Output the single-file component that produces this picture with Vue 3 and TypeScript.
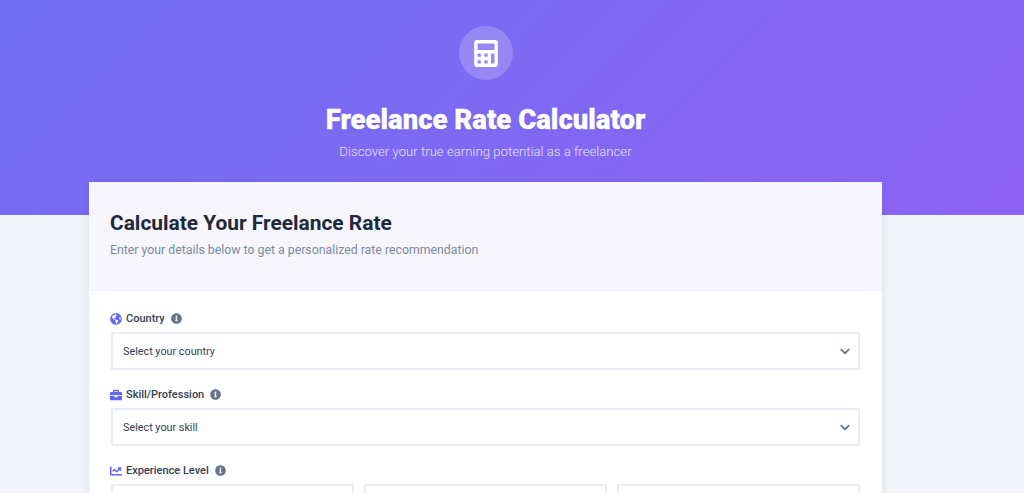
<script setup lang="ts">
interface Field {
  id: string
  label: string
  placeholder: string
  viewBox: string
  icon: string
}

const fields: Field[] = [
  {
    id: 'country',
    label: 'Country',
    placeholder: 'Select your country',
    viewBox: '0 0 496 512',
    icon: 'M248 8C111.03 8 0 119.03 0 256s111.03 248 248 248 248-111.03 248-248S384.97 8 248 8zm82.29 357.6c-3.9 3.88-7.99 7.95-11.31 11.28-2.99 3-5.1 6.7-6.17 10.71-1.51 5.66-2.73 11.38-4.77 16.87l-17.39 46.85c-13.76 3-28 4.69-42.65 4.69v-27.38c1.69-12.62-7.64-36.26-22.63-51.25-6-6-9.37-14.14-9.37-22.63v-32.01c0-11.64-6.27-22.34-16.46-27.97-14.37-7.95-34.81-19.06-48.81-26.11-11.48-5.78-22.1-13.14-31.65-21.75l-.8-.72a114.792 114.792 0 0 1-18.06-20.74c-9.38-13.77-24.66-36.42-34.59-51.14 20.47-45.5 57.36-82.04 103.2-101.89l24.01 12.01C203.48 89.74 216 82.01 216 70.11v-11.3c7.99-1.29 16.12-2.11 24.39-2.42l28.3 28.3c6.25 6.25 6.25 16.38 0 22.63L264 112l-10.34 10.34c-3.12 3.12-3.12 8.19 0 11.31l4.69 4.69c3.12 3.12 3.12 8.19 0 11.31l-8 8a8.008 8.008 0 0 1-5.66 2.34h-8.99c-2.08 0-4.08.81-5.58 2.27l-9.92 9.65a8.008 8.008 0 0 0-1.58 9.31l15.59 31.19c2.66 5.32-1.21 11.58-7.15 11.58h-5.64c-1.93 0-3.79-.7-5.24-1.96l-9.28-8.06a16.017 16.017 0 0 0-15.55-3.1l-31.17 10.39a11.95 11.95 0 0 0-8.17 11.34c0 4.53 2.56 8.66 6.61 10.69l11.08 5.54c9.41 4.71 19.79 7.16 30.31 7.16s22.59 27.29 32 32h66.75c8.49 0 16.62 3.37 22.63 9.37l13.69 13.69a30.503 30.503 0 0 1 8.93 21.57 46.536 46.536 0 0 1-13.72 32.98zM417 274.25c-5.79-1.45-10.84-5-14.15-9.97l-17.98-26.97a23.97 23.97 0 0 1 0-26.62l19.59-29.38c2.32-3.47 5.5-6.29 9.24-8.15l12.98-6.49C440.2 193.59 448 223.87 448 256c0 8.67-.74 17.16-1.82 25.54L417 274.25z',
  },
  {
    id: 'skill',
    label: 'Skill/Profession',
    placeholder: 'Select your skill',
    viewBox: '0 0 512 512',
    icon: 'M320 336c0 8.84-7.16 16-16 16h-96c-8.84 0-16-7.16-16-16v-48H0v144c0 25.6 22.4 48 48 48h416c25.6 0 48-22.4 48-48V288H320v48zm144-208h-80V80c0-25.6-22.4-48-48-48H176c-25.6 0-48 22.4-48 48v48H48c-25.6 0-48 22.4-48 48v80h512v-80c0-25.6-22.4-48-48-48zm-144 0H192V96h128v32z',
  },
]

const chartIcon = 'M496 384H64V80c0-8.84-7.16-16-16-16H16C7.16 64 0 71.16 0 80v336c0 17.67 14.33 32 32 32h464c8.84 0 16-7.16 16-16v-32c0-8.84-7.16-16-16-16zM464 96H345.94c-21.38 0-32.09 25.85-16.97 40.97l32.4 32.4L288 242.75l-73.37-73.37c-12.5-12.5-32.76-12.5-45.25 0l-68.69 68.69c-6.25 6.25-6.25 16.38 0 22.63l22.62 22.62c6.25 6.25 16.38 6.25 22.63 0L192 237.25l73.37 73.37c12.5 12.5 32.76 12.5 45.25 0l96-96 32.4 32.4c15.12 15.12 40.97 4.41 40.97-16.97V112c0-8.84-7.16-16-16-16z'
const infoIcon = 'M256 8C119.043 8 8 119.083 8 256c0 136.997 111.043 248 248 248s248-111.003 248-248C504 119.083 392.957 8 256 8zm0 110c23.196 0 42 18.804 42 42s-18.804 42-42 42-42-18.804-42-42 18.804-42 42-42zm56 254c0 6.627-5.373 12-12 12h-88c-6.627 0-12-5.373-12-12v-24c0-6.627 5.373-12 12-12h12v-64h-12c-6.627 0-12-5.373-12-12v-24c0-6.627 5.373-12 12-12h64c6.627 0 12 5.373 12 12v100h12c6.627 0 12 5.373 12 12v24z'
const chevronIcon = 'M207.029 381.476L12.686 187.132c-9.373-9.373-9.373-24.569 0-33.941l22.667-22.667c9.357-9.357 24.522-9.375 33.901-.04L224 284.505l154.745-154.021c9.379-9.335 24.544-9.317 33.901.04l22.667 22.667c9.373 9.373 9.373 24.569 0 33.941L240.971 381.476c-9.373 9.372-24.569 9.372-33.942 0z'
const calculatorIcon = 'M400 0H48C22.4 0 0 22.4 0 48v416c0 25.6 22.4 48 48 48h352c25.6 0 48-22.4 48-48V48c0-25.6-22.4-48-48-48zM128 435c0 6.4-6.4 12.8-12.8 12.8H76.8c-6.4 0-12.8-6.4-12.8-12.8v-38.4c0-6.4 6.4-12.8 12.8-12.8h38.4c6.4 0 12.8 6.4 12.8 12.8V435zm0-128c0 6.4-6.4 12.8-12.8 12.8H76.8c-6.4 0-12.8-6.4-12.8-12.8v-38.4c0-6.4 6.4-12.8 12.8-12.8h38.4c6.4 0 12.8 6.4 12.8 12.8V307zm128 128c0 6.4-6.4 12.8-12.8 12.8h-38.4c-6.4 0-12.8-6.4-12.8-12.8v-38.4c0-6.4 6.4-12.8 12.8-12.8h38.4c6.4 0 12.8 6.4 12.8 12.8V435zm0-128c0 6.4-6.4 12.8-12.8 12.8h-38.4c-6.4 0-12.8-6.4-12.8-12.8v-38.4c0-6.4 6.4-12.8 12.8-12.8h38.4c6.4 0 12.8 6.4 12.8 12.8V307zm128 128c0 6.4-6.4 12.8-12.8 12.8h-38.4c-6.4 0-12.8-6.4-12.8-12.8V268.8c0-6.4 6.4-12.8 12.8-12.8h38.4c6.4 0 12.8 6.4 12.8 12.8V435zm0-256c0 6.4-6.4 12.8-12.8 12.8H76.8c-6.4 0-12.8-6.4-12.8-12.8V76.8C64 70.4 70.4 64 76.8 64h294.4c6.4 0 12.8 6.4 12.8 12.8V179z'

const levels = [1, 2, 3]
</script>

<template>
  <div class="page">
    <header class="hero">
      <div class="hero-inner">
        <div class="hero-icon">
          <svg viewBox="0 0 448 512" width="24" height="27"><path :d="calculatorIcon" /></svg>
        </div>
        <h1>Freelance Rate Calculator</h1>
        <p>Discover your true earning potential as a freelancer</p>
      </div>
    </header>

    <main class="card">
      <div class="card-header">
        <h2>Calculate Your Freelance Rate</h2>
        <p>Enter your details below to get a personalized rate recommendation</p>
      </div>

      <div class="card-body">
        <div v-for="field in fields" :key="field.id" class="form-group">
          <label class="field-label">
            <svg class="label-icon" :viewBox="field.viewBox"><path :d="field.icon" /></svg>
            {{ field.label }}
            <svg class="info-icon" viewBox="0 0 512 512"><path :d="infoIcon" /></svg>
          </label>
          <div class="select">
            <span>{{ field.placeholder }}</span>
            <svg class="chevron" viewBox="0 0 448 512"><path :d="chevronIcon" /></svg>
          </div>
        </div>

        <div class="form-group">
          <label class="field-label">
            <svg class="label-icon" viewBox="0 0 512 512"><path :d="chartIcon" /></svg>
            Experience Level
            <svg class="info-icon" viewBox="0 0 512 512"><path :d="infoIcon" /></svg>
          </label>
          <div class="levels">
            <div v-for="level in levels" :key="level" class="level"></div>
          </div>
        </div>
      </div>
    </main>
  </div>
</template>

<style>
html,
body {
  height: 100%;
  overflow: hidden;
}
</style>

<style scoped>
.page {
  height: 100vh;
  overflow: hidden;
  background: #f1f5f9;
  font-family: Roboto, "Noto Sans", sans-serif;
}

.hero {
  height: 215px;
  box-sizing: border-box;
  padding: 26px 0 0 89px;
  background: linear-gradient(135deg, #706ef2, #8e63f4);
  color: #ffffff;
}

.hero-inner {
  width: 793px;
  display: flex;
  flex-direction: column;
  align-items: center;
}

.hero-icon {
  width: 54px;
  height: 54px;
  border-radius: 50%;
  background: rgba(255, 255, 255, 0.2);
  display: flex;
  align-items: center;
  justify-content: center;
}

.hero-icon svg {
  fill: #ffffff;
}

.hero h1 {
  margin: 20px 0 0;
  font-size: 27.5px;
  line-height: 40px;
  font-weight: 900;
  -webkit-text-stroke: 0.3px #ffffff;
  text-shadow: 0 1px 2px rgba(0, 0, 0, 0.1);
}

.hero p {
  margin: 2px 0 0;
  font-size: 13.2px;
  line-height: 20px;
  font-weight: 300;
  opacity: 0.8;
}

.card {
  width: 793px;
  margin: -33px 0 0 89px;
  position: relative;
  background: #ffffff;
  box-shadow: 0 2px 10px rgba(15, 23, 42, 0.08);
}

.card-header {
  height: 109px;
  box-sizing: border-box;
  padding: 26px 21px 0;
  background: #f7f6fd;
  border-bottom: 1px solid #f1f1f8;
}

.card-header h2 {
  margin: 0;
  font-size: 20.9px;
  line-height: 30px;
  font-weight: 700;
  color: #1e293b;
}

.card-header p {
  margin: 2px 0 0;
  font-size: 12.3px;
  line-height: 20px;
  color: #7c8aa0;
}

.card-body {
  padding: 18px 22px 0;
}

.form-group {
  margin-bottom: 15px;
}

.field-label {
  display: flex;
  align-items: center;
  height: 19px;
  margin-bottom: 4px;
  margin-left: -1px;
  font-size: 11px;
  font-weight: 500;
  color: #334155;
}

.label-icon {
  width: 12px;
  height: 12px;
  margin-right: 4px;
  fill: #6366f1;
}

.info-icon {
  width: 11px;
  height: 11px;
  margin-left: 6px;
  fill: #64748b;
}

.select {
  height: 38px;
  box-sizing: border-box;
  padding: 1px 8px 0 10px;
  display: flex;
  align-items: center;
  justify-content: space-between;
  border: 2px solid #e8edf4;
  background: #ffffff;
  font-size: 10.8px;
  color: #334155;
}

.chevron {
  width: 10px;
  height: 11px;
  fill: #64748b;
}

.levels {
  display: grid;
  grid-template-columns: repeat(3, 1fr);
  gap: 10.5px;
}

.level {
  height: 60px;
  box-sizing: border-box;
  border: 2px solid #e8edf4;
}
</style>
